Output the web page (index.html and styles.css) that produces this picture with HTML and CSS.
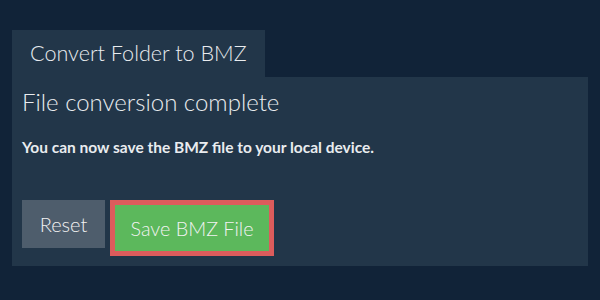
FILE: index.html
```html
<!DOCTYPE html>
<html>
<head>
<meta charset="utf-8">
<link rel="stylesheet" href="styles.css">
</head>
<body>
<div class="page">
  <div class="tab">Convert Folder to BMZ</div>
  <div class="panel">
    <h2 class="title">File conversion complete</h2>
    <p class="msg">You can now save the BMZ file to your local device.</p>
    <div class="actions">
      <button class="btn btn-reset">Reset</button>
      <button class="btn btn-save">Save BMZ File</button>
    </div>
  </div>
</div>
</body>
</html>
```
FILE: styles.css
```css
html, body {
  margin: 0;
  padding: 0;
  background: #112338;
  font-family: Lato, "Open Sans", sans-serif;
  color: #e9ecef;
}
.page {
  padding: 30px 12px 0 12px;
}
.tab {
  display: inline-block;
  background: #223649;
  width: 253px;
  height: 47px;
  line-height: 47px;
  padding: 0 0 0 18px;
  font-size: 21.6px;
  font-weight: 300;
  box-sizing: border-box;
  white-space: nowrap;
}
.panel {
  background: #223649;
  padding: 10px 10px 10px 10px;
}
.title {
  margin: 0;
  font-weight: 300;
  font-size: 24px;
  line-height: 29px;
}
.msg {
  margin: 22px 0 0 0;
  font-weight: 700;
  font-size: 15.5px;
  line-height: 18px;
}
.actions {
  display: flex;
  align-items: flex-start;
  gap: 5px;
  margin-top: 44px;
}
.btn {
  font-family: Lato, "Open Sans", sans-serif;
  color: #f2f2f2;
  border: 0;
  margin: 0;
  cursor: pointer;
  font-weight: 300;
}
.btn-reset {
  background: #4e5d6c;
  width: 83px;
  height: 48px;
  font-size: 20px;
  padding: 0;
}
.btn-save {
  background: #5cb85c;
  border: 5px solid #dc5c5c;
  width: 164px;
  height: 56px;
  font-size: 19.8px;
  padding: 0;
}
```
